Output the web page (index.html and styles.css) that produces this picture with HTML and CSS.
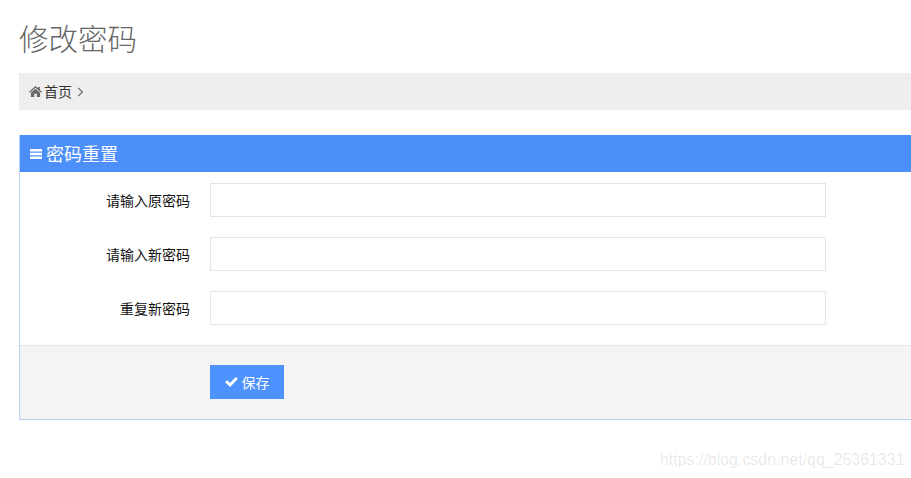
FILE: index.html
```html
<!DOCTYPE html>
<html lang="zh-CN">
<head>
<meta charset="utf-8">
<title>修改密码</title>
<link rel="stylesheet" href="styles.css">
</head>
<body>
<main class="page">
  <h1 class="title">修改密码</h1>
  <nav class="crumb">
    <svg class="icon-home" viewBox="0 0 24 20"><path d="M12 0 0 10.5l1.5 1.7L12 3l10.5 9.2 1.5-1.7-4-3.5V1.500h-3.500v2.400L12 0zM12 5 3.500 12.400V20h6v-6h5v6h6v-7.600L12 5z" fill="#666"/></svg>
    <a class="crumb-link">首页</a>
    <svg class="icon-chev" viewBox="0 0 7 11"><path d="M1 1l4.500 4.500L1 10" fill="none" stroke="#666" stroke-width="1.300"/></svg>
  </nav>
  <section class="panel">
    <header class="panel-head">
      <svg class="icon-bars" viewBox="0 0 12 10"><path d="M0 0h12v2.400H0zM0 3.800h12v2.400H0zM0 7.600h12V10H0z" fill="#fff"/></svg>
      <span class="panel-title">密码重置</span>
    </header>
    <form class="form">
      <div class="rows">
        <div class="row"><label class="label">请输入原密码</label><input class="field" type="password"></div>
        <div class="row"><label class="label">请输入新密码</label><input class="field" type="password"></div>
        <div class="row"><label class="label">重复新密码</label><input class="field" type="password"></div>
      </div>
      <div class="actions">
        <button class="btn" type="button">
          <svg class="icon-check" viewBox="0 0 14 11"><path d="M0 5.800l2.300-2.300 3.100 3L11.700 0 14 2.300 5.400 11z" fill="#fff"/></svg>
          <span>保存</span>
        </button>
      </div>
    </form>
  </section>
</main>
<div class="watermark">https://blog.csdn.net/qq_25361331</div>
</body>
</html>
```
FILE: styles.css
```css
html, body {
  margin: 0;
  padding: 0;
  background: #fff;
  overflow: hidden;
  height: 100%;
}
body {
  font-family: "Liberation Sans", "Noto Sans CJK SC", sans-serif;
  font-size: 14px;
  color: #333;
  position: relative;
}
.page {
  margin-left: 19px;
  width: 912px;
  padding-top: 21px;
}
.title {
  margin: 0 0 15px;
  font-size: 29.500px;
  line-height: 37px;
  font-weight: 300;
  color: #666;
}
.crumb {
  display: flex;
  align-items: center;
  height: 37px;
  padding: 0 0 2px 10px;
  box-sizing: border-box;
  background: #eee;
  color: #333;
  font-size: 14px;
}
.icon-home { width: 13px; height: 11px; margin: 2px 2px 0 0; }
.crumb-link { color: #333; }
.icon-chev { width: 7px; height: 10px; margin: 2px 0 0 5px; }
.panel {
  margin-top: 25px;
  border: 1px solid #b9cdf5;
  border-top: 0;
  border-right: 0;
  background: #fff;
}
.panel-head {
  display: flex;
  align-items: center;
  height: 37px;
  padding-left: 10px;
  background: #4c8efa;
  color: #fff;
  font-size: 18px;
}
.panel-title { margin-bottom: 2px; }
.icon-bars { width: 12px; height: 10px; margin-right: 4px; }
.rows {
  display: flex;
  flex-direction: column;
  gap: 20px;
  padding: 11px 0 20px;
}
.row {
  display: flex;
  align-items: center;
  height: 34px;
}
.label {
  width: 170px;
  margin-bottom: 1px;
  text-align: right;
  color: #111;
  font-size: 14px;
}
.field {
  width: 616px;
  height: 34px;
  box-sizing: border-box;
  margin-left: 20px;
  border: 1px solid #e5e5e5;
  background: #fff;
  padding: 6px 12px;
}
.actions {
  border-top: 1px solid #e5e5e5;
  background: #f4f4f4;
  padding: 19px 0 20px 190px;
}
.btn {
  display: flex;
  align-items: center;
  justify-content: center;
  width: 74px;
  height: 34px;
  border: 0;
  padding: 0;
  background: #4e92ff;
  color: #fff;
  font-family: inherit;
  font-size: 14px;
}
.icon-check { width: 13px; height: 10px; margin-right: 4px; }
.watermark {
  position: absolute;
  left: 660px;
  top: 451px;
  font-size: 15.950px;
  line-height: 18px;
  color: rgba(0, 0, 0, 0.1);
  white-space: nowrap;
}
```
